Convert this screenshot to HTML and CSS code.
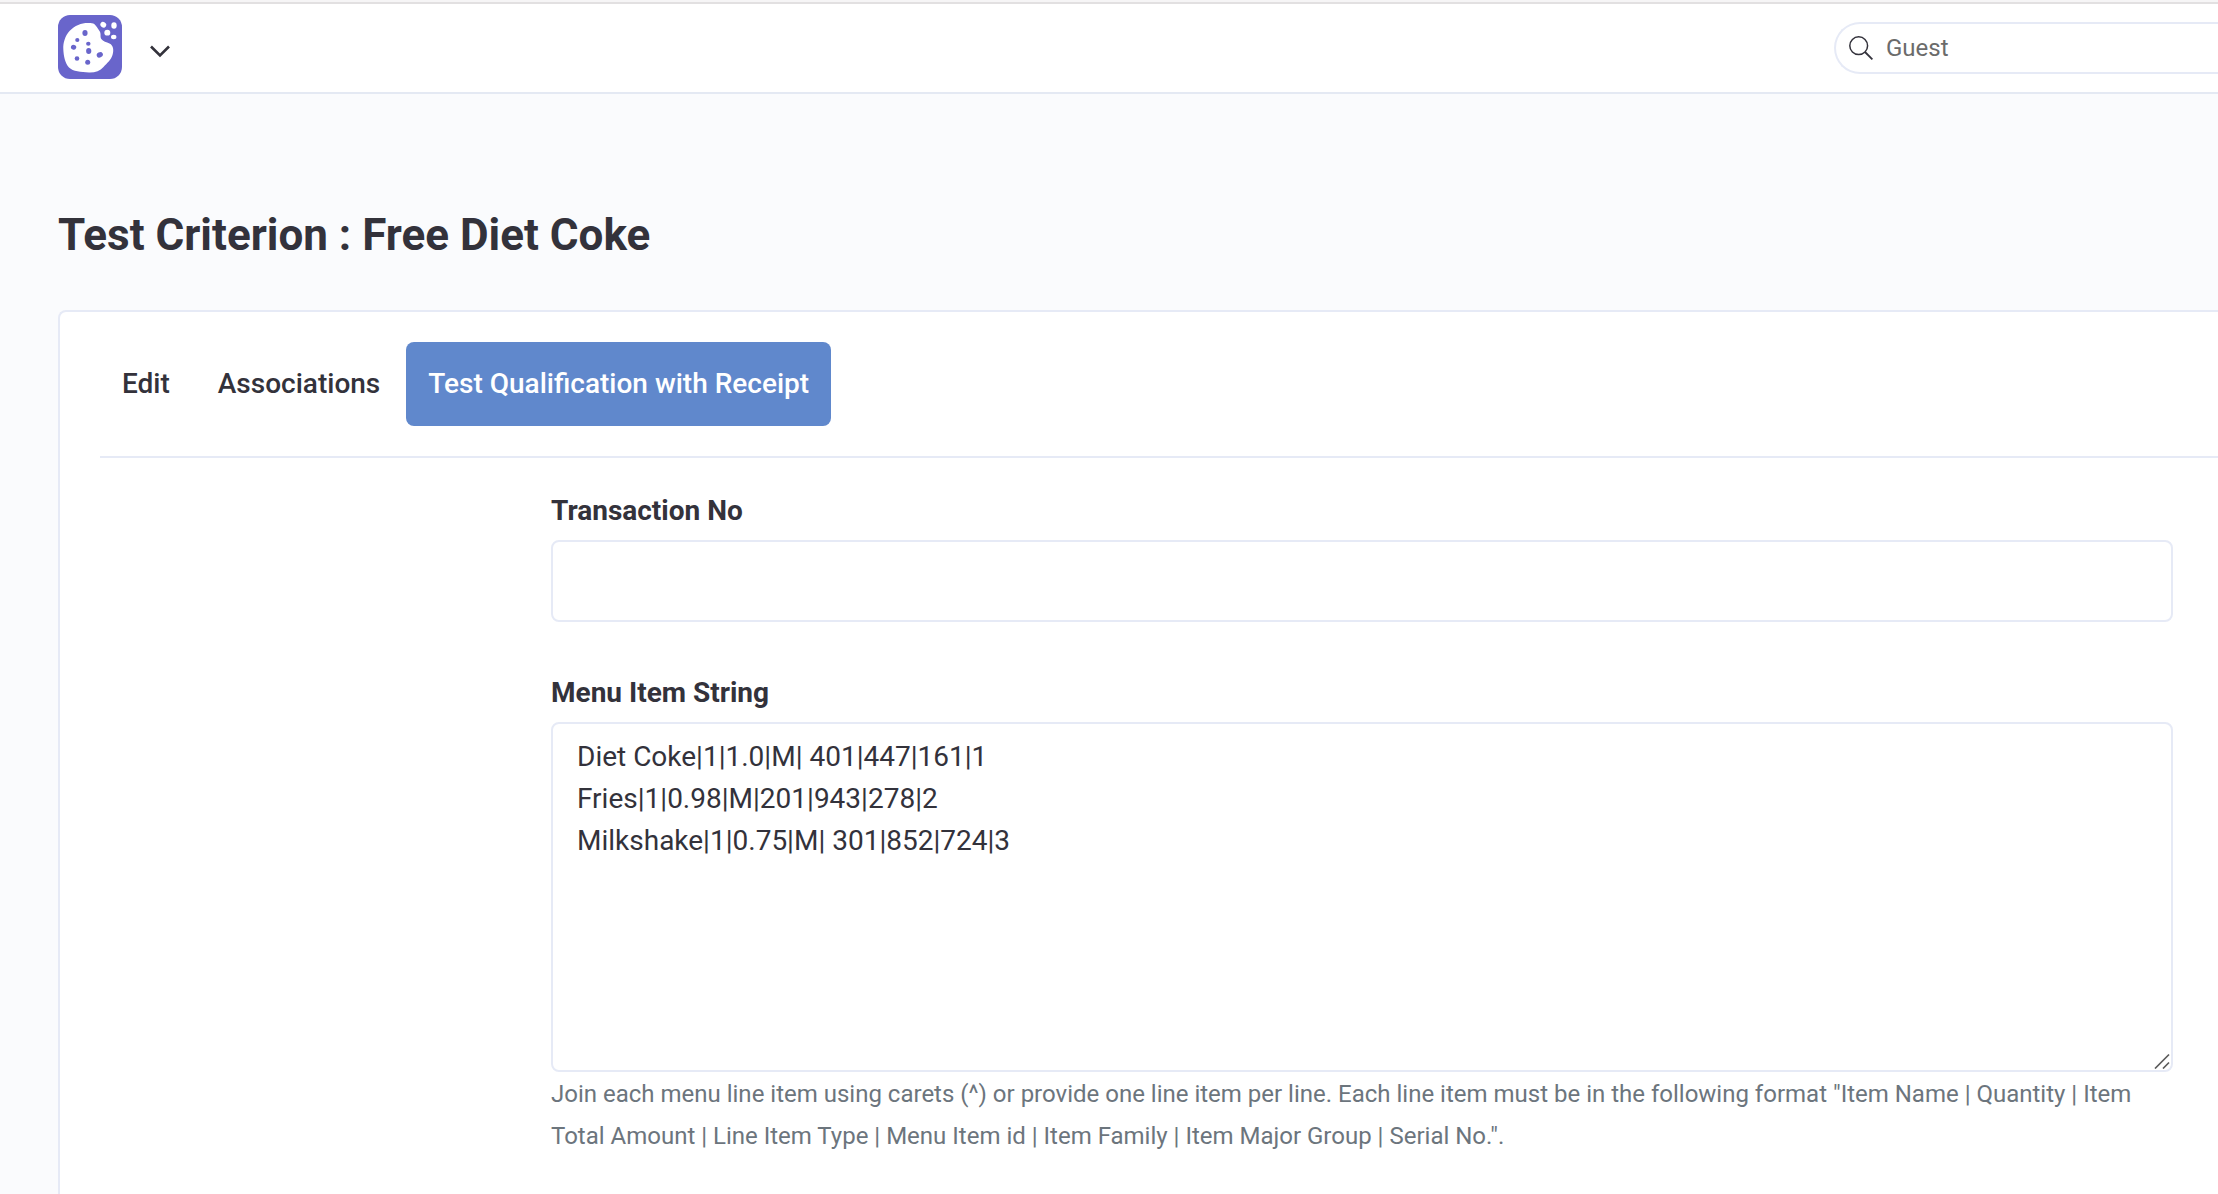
FILE: index.html
```html
<!DOCTYPE html>
<html lang="en">
<head>
<meta charset="utf-8">
<title>Test Criterion : Free Diet Coke</title>
<link rel="stylesheet" href="styles.css">
</head>
<body>
<header class="topbar">
  <div class="brand">
    <a class="brand-link" href="#" aria-label="Home">
      <svg class="logo" viewBox="0 0 64 64" aria-hidden="true">
        <rect width="64" height="64" rx="12" fill="#6965cb"/>
        <path d="M31 8C25 7.500 17 10 11.500 16C7 21 5 28 5.300 34C5.600 41 7 48 11 52.500C15 56.500 23 57 31 57.500C37 57.700 42 56 45.500 52C49 48 53 45 54.500 40C56 35 55.500 30.500 51.500 28.500C48.500 27 45 26.500 43.300 24C41.800 21.500 43.500 19 41.500 16C39.500 13.500 38.500 11 36.500 9.300C35 8 33 8 31 8Z" fill="#fff"/>
        <g fill="#6965cb">
          <ellipse cx="27" cy="18" rx="2.600" ry="3"/>
          <ellipse cx="19.300" cy="25" rx="2.100" ry="2"/>
          <ellipse cx="15.600" cy="32.200" rx="2.700" ry="2.400" transform="rotate(20 15.600 32.200)"/>
          <ellipse cx="30.300" cy="28.700" rx="2.200" ry="2"/>
          <ellipse cx="30.700" cy="36" rx="2.600" ry="2.900"/>
          <ellipse cx="41.800" cy="39.800" rx="3.200" ry="2.600" transform="rotate(-30 41.800 39.800)"/>
          <circle cx="19" cy="43.500" r="2.300"/>
          <circle cx="29.700" cy="47.300" r="2.500"/>
        </g>
        <g fill="#fff">
          <ellipse cx="45.300" cy="9.800" rx="3" ry="2.700" transform="rotate(35 45.300 9.800)"/>
          <ellipse cx="56" cy="10.500" rx="2.700" ry="3.300"/>
          <ellipse cx="49.300" cy="17.700" rx="3" ry="2.900"/>
          <ellipse cx="55.700" cy="22" rx="2.700" ry="2.200"/>
        </g>
      </svg>
    </a>
    <button class="switcher" type="button" aria-label="Switch business">
      <svg class="chevron" viewBox="0 0 22 14" aria-hidden="true"><path d="M2 2.500L11 11.500L20 2.500" fill="none" stroke="#33323b" stroke-width="2.600"/></svg>
    </button>
  </div>
  <label class="search">
    <svg class="search-icon" viewBox="0 0 24 24" aria-hidden="true"><circle cx="9.700" cy="9.700" r="8.900" fill="none" stroke="#33323b" stroke-width="1.500"/><path d="M16 16L23.400 23.400" stroke="#33323b" stroke-width="1.800"/></svg>
    <input class="search-input" type="search" placeholder="Guest" aria-label="Search guests">
  </label>
</header>
<main class="page">
  <h1 class="title">Test Criterion : Free Diet Coke</h1>
  <section class="card">
    <nav class="tabs">
      <a class="tab" href="#">Edit</a>
      <a class="tab" href="#">Associations</a>
      <a class="tab tab-active" href="#" aria-current="page">Test Qualification with Receipt</a>
    </nav>
    <form class="form">
      <div class="field">
        <label class="label" for="transaction">Transaction No</label>
        <input class="control text-input" id="transaction" type="text">
      </div>
      <div class="field">
        <label class="label" for="menu-items">Menu Item String</label>
        <div class="area-wrap">
          <textarea class="control text-area" id="menu-items" aria-describedby="menu-help">Diet Coke|1|1.0|M| 401|447|161|1
Fries|1|0.98|M|201|943|278|2
Milkshake|1|0.75|M| 301|852|724|3</textarea>
          <svg class="grip" viewBox="0 0 16 16" aria-hidden="true"><path d="M1 15.500L15 1.500M9 15.500L15 9.500" stroke="#5c5c5c" stroke-width="1.700"/></svg>
        </div>
        <p class="help" id="menu-help">Join each menu line item using carets (^) or provide one line item per line. Each line item must be in the following format "Item Name | Quantity | Item Total Amount | Line Item Type | Menu Item id | Item Family | Item Major Group | Serial No.".</p>
      </div>
    </form>
  </section>
</main>
</body>
</html>
```
FILE: styles.css
```css
* {
  box-sizing: border-box;
}

body {
  margin: 0;
  min-height: 100vh;
  display: flex;
  flex-direction: column;
  border-top: 2px solid #f6f5f6;
  background: #fafbfd;
  color: #33323b;
  font: 28px/42px Roboto, sans-serif;
}

.topbar {
  display: flex;
  align-items: center;
  justify-content: space-between;
  padding: 11px 0 13px 58px;
  border-top: 2px solid #e2e0e1;
  border-bottom: 2px solid #e4e9f3;
  background: #fff;
}

.brand {
  display: flex;
  align-items: center;
  gap: 27px;
}

.brand-link,
.logo,
.chevron {
  display: block;
}

.logo {
  width: 64px;
  height: 64px;
}

.switcher {
  padding: 8px 0 0;
  border: 0;
  background: none;
}

.chevron {
  width: 22px;
  height: 14px;
}

.search {
  display: flex;
  align-items: center;
  gap: 13px;
  width: 384px;
  margin-top: 2px;
  padding: 6px 0 6px 13px;
  border: 2px solid #e6eaf6;
  border-right: 0;
  border-radius: 26px 0 0 26px;
}

.search-icon {
  flex: none;
  width: 24px;
  height: 24px;
}

.search-input {
  flex: 1;
  min-width: 0;
  padding: 0;
  border: 0;
  outline: 0;
  background: none;
  color: #33323b;
  font: 24px/36px Roboto, sans-serif;
}

.search-input::placeholder {
  color: #6b6b6b;
}

.page {
  flex: 1;
  display: flex;
  flex-direction: column;
  padding: 113px 0 0 58px;
}

.title {
  margin: 0 0 47px;
  font-size: 44px;
  line-height: 56px;
  font-weight: 700;
}

.card {
  flex: 1;
  padding: 30px 0 0 40px;
  border: 2px solid #e6eaf6;
  border-width: 2px 0 0 2px;
  border-radius: 8px 0 0 0;
  background: #fff;
}

.tabs {
  display: flex;
  gap: 4px;
  padding-bottom: 30px;
  border-bottom: 2px solid #e6eaf6;
}

.tab {
  padding: 21px 22px;
  border-radius: 8px;
  color: #33323b;
  font-weight: 500;
  text-decoration: none;
}

.tab-active {
  background: #6088cc;
  color: #fff;
}

.form {
  display: flex;
  flex-direction: column;
  gap: 50px;
  padding: 32px 45px 0 451px;
}

.field {
  display: flex;
  flex-direction: column;
}

.label {
  margin-bottom: 8px;
  font-weight: 700;
}

.control {
  display: block;
  width: 100%;
  border: 2px solid #e6eaf6;
  border-radius: 8px;
  outline: 0;
  background: #fff;
  color: #33323b;
  font: 28px/42px Roboto, sans-serif;
}

.text-input {
  height: 82px;
  padding: 18px 24px;
}

.area-wrap {
  position: relative;
}

.text-area {
  height: 350px;
  padding: 12px 24px;
  resize: none;
}

.grip {
  position: absolute;
  right: 3px;
  bottom: 3px;
  width: 16px;
  height: 16px;
}

.help {
  margin: 1px 0 0;
  color: #6c757d;
  font-size: 24px;
}
```
